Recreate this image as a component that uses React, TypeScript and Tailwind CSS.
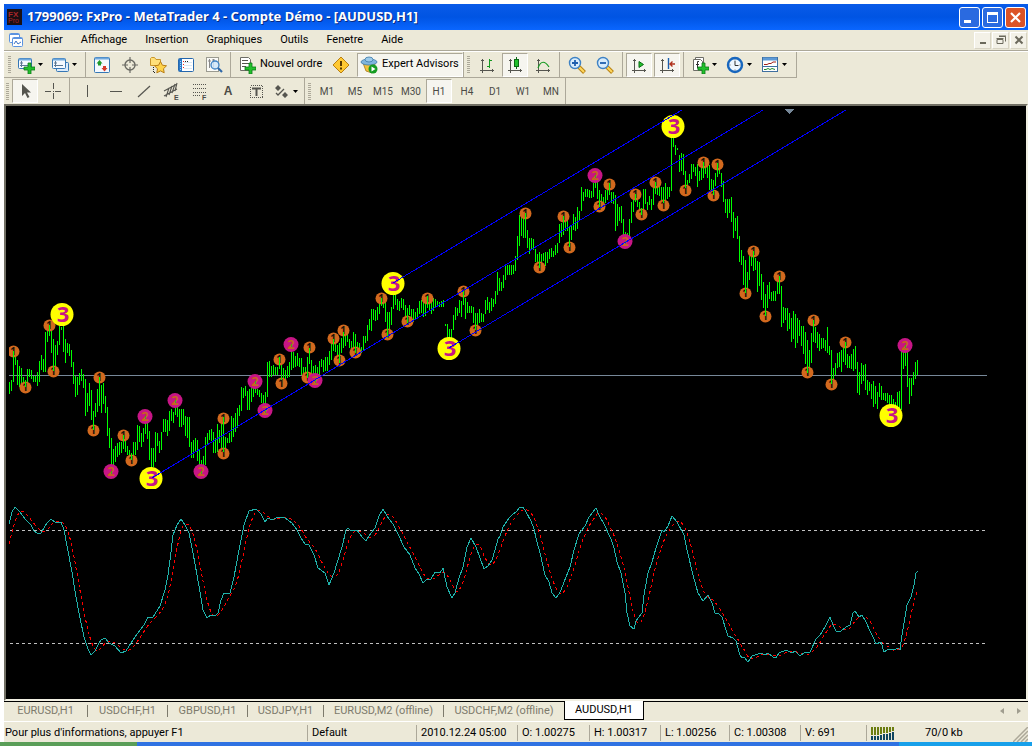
import type { ReactNode } from 'react';

// high-low of every bar, two pixels apart
const BAR_START = 9;
const BAR_STEP = 2;
const BARS = `
382-394 380-391 351-382 356-365 360-385 366-387 368-386 377-383 380-387 369-386
369-377 370-379 376-382 376-382 372-386 361-382 355-370 359-372 332-372 325-342
325-336 331-353 339-371 345-367 341-355 326-345 327-330 326-352 339-363 343-353
344-356 350-367 362-384 376-397 377-395 373-385 369-381 374-388 379-416 393-412
383-406 390-420 411-430 403-417 389-412 377-406 385-413 383-404 396-413 407-436
428-448 438-468 449-468 446-462 443-457 442-455 442-453 435-449 441-452 446-455
450-458 453-460 442-456 442-455 425-450 426-442 433-447 428-442 423-434 423-439
431-460 448-468 448-467 432-462 433-446 441-453 432-450 419-432 419-432 420-436
411-431 409-421 412-423 408-415 407-417 409-427 409-427 409-425 416-436 417-438
417-447 442-458 440-458 438-452 440-461 449-470 460-470 456-468 437-465 433-445
430-440 429-441 432-453 438-453 424-452 430-443 423-448 417-452 437-450 438-443
433-443 416-442 418-437 413-432 408-428 405-416 387-411 388-398 386-396 391-410
389-410 388-402 388-397 388-393 389-395 390-397 393-403 395-405 392-407 362-397
361-377 366-377 365-375 367-375 367-375 357-369 365-380 368-381 370-380 366-378
362-377 350-370 352-368 356-367 353-366 358-367 358-375 367-380 367-382 357-378
348-364 360-382 366-375 365-377 367-377 361-375 359-367 360-372 357-371 357-371
351-365 343-360 339-351 342-352 345-355 343-363 338-353 332-348 333-346 333-342
339-348 341-355 332-347 334-353 342-352 343-353 347-353 336-350 336-343 325-341
319-330 309-331 309-320 310-321 307-320 303-314 298-306 298-308 301-322 312-338
312-332 307-325 293-309 295-305 299-310 301-311 298-308 299-310 305-318 308-323
305-315 309-318 309-322 312-320 308-318 301-314 300-313 301-317 299-316 296-308
300-310 302-314 298-311 299-307 301-306 302-307 301-307 300-307 324-326 324-338
329-338 329-338 315-330 307-320 308-316 300-313 301-317 290-305 298-319 302-313
306-313 306-313 307-323 313-330 313-327 309-323 313-322 314-322 300-314 297-310
302-313 298-311 299-307 291-304 272-295 278-291 282-291 275-288 264-280 265-275
265-275 265-275 265-274 256-271 236-260 215-246 216-236 218-238 213-238 230-248
238-254 238-250 239-250 249-262 254-267 252-268 254-262 253-261 252-266 252-263
249-259 248-257 251-257 245-255 243-253 224-243 223-237 216-235 221-231 219-231
227-247 226-240 214-230 217-231 207-229 211-220 187-211 192-201 189-197 189-197
190-198 191-198 183-197 175-188 182-199 190-207 194-205 197-204 190-203 188-200
183-195 192-203 192-204 195-231 204-226 207-221 206-223 219-235 232-242 233-240
219-237 202-223 197-212 194-202 197-207 202-215 208-215 189-210 189-204 202-210
196-205 199-210 187-205 182-194 185-195 184-196 187-205 187-203 183-200 187-199
187-197 133-191 138-147 145-155 148-150 155-172 153-171 154-175 171-188 180-187
174-183 164-179 164-172 167-176 164-187 171-181 168-180 162-178 165-174 164-178
165-190 179-195 180-195 173-186 163-177 167-174 173-187 181-202 199-213 199-218
199-213 197-222 212-238 218-231 216-239 236-262 250-265 256-285 260-293 272-288
256-280 256-266 251-271 258-270 261-292 262-286 274-300 282-308 294-316 285-308
282-299 292-301 291-301 291-301 280-294 276-294 286-327 307-323 308-320 308-331
313-329 318-342 311-339 314-348 318-343 320-336 326-346 326-354 332-364 340-373
350-367 333-363 320-342 327-343 332-348 334-351 338-349 338-348 340-351 327-353
346-355 350-384 368-380 363-375 353-368 352-367 350-372 344-362 342-365 354-368
356-368 354-369 349-371 346-369 362-393 372-395 363-384 365-381 364-390 380-395
382-391 384-399 381-407 386-404 392-409 383-397 386-400 393-400 393-401 393-403
395-405 395-410 399-405 402-408 392-410 391-408 348-410 352-369 345-366 352-387
378-404 378-396 372-385 362-379 360-375
`.trim().split(/\s+/).map((bar) => bar.split('-').map(Number));

const STOCHASTIC = `
9,524 12,512 15,507 20,512 26,520 31,525 34,531 37,533 41,533 44,528 47,523 51,519 55,522 61,522
64,530 68,551 72,572 76,597 80,618 84,637 88,649 91,655 95,651 98,645 101,640 105,638 109,643
115,646 121,653 126,651 131,643 137,634 144,625 148,617 153,617 160,606 165,590 168,575 170,560
173,535 177,525 181,519 185,525 189,533 193,553 197,575 200,592 203,610 207,618 211,615 215,616
218,613 221,600 224,593 230,593 234,577 239,550 244,525 249,511 256,509 261,514 265,522 268,518
272,520 278,517 284,517 292,523 297,530 301,538 305,544 309,545 314,555 318,568 325,573 329,585
334,573 338,560 342,547 346,530 348,528 351,531 357,530 362,537 366,541 369,536 375,528 379,516
383,509 387,516 393,524 399,536 404,547 410,555 415,568 419,574 423,583 427,579 431,579 435,572
440,573 443,568 447,587 452,598 455,593 459,578 463,567 467,547 471,538 476,547 480,558 484,569
488,566 492,560 495,550 498,539 500,536 503,527 509,518 513,514 516,512 520,507 523,507 526,512
531,521 534,529 536,538 540,553 543,566 545,575 549,582 552,593 556,598 559,594 561,590 564,582
570,567 574,550 579,534 585,526 589,517 596,508 599,515 604,524 611,539 614,548 617,562 621,573
625,593 627,613 630,626 634,629 636,621 642,613 644,595 648,573 652,562 656,548 662,530 664,532
668,526 672,516 677,522 684,535 687,550 693,575 698,593 703,601 708,595 712,603 715,613 719,614
722,617 726,630 728,636 733,638 736,641 740,655 742,658 744,657 748,662 752,656 761,653 765,655
768,653 773,657 776,658 779,653 786,650 792,653 795,651 800,656 804,653 810,652 816,639 820,635
825,627 830,617 833,625 836,631 841,631 846,627 850,625 853,613 855,611 859,617 862,615 866,622
870,631 873,637 876,644 881,642 884,652 889,649 896,649 898,648 900,650 902,635 907,605 911,597
914,585 916,573 918,571
`.trim().split(/\s+/).map((point) => point.split(',').map(Number));

const valueAt = (x: number) => {
  if (x <= STOCHASTIC[0][0]) return 524 + (9 - x) * 4;
  const i = STOCHASTIC.findIndex((p) => p[0] >= x);
  if (i < 1) return STOCHASTIC[STOCHASTIC.length - 1][1];
  const [x0, y0] = STOCHASTIC[i - 1];
  const [x1, y1] = STOCHASTIC[i];
  return y0 + ((y1 - y0) * (x - x0)) / (x1 - x0);
};

// signal line: moving average of the main line
const SIGNAL = BARS.map((_, i) => {
  const x = BAR_START + i * BAR_STEP;
  const window = [0, 2, 4, 6, 8, 10].map((back) => valueAt(x - back));
  return [x, Math.round(window.reduce((a, b) => a + b, 0) / window.length)];
});

const LEVEL_1 = [
  [13, 351], [49, 325], [53, 371], [25, 387], [99, 377], [93, 430], [123, 435], [131, 460], [223, 418], [223, 453],
  [279, 359], [281, 383], [309, 347], [307, 377], [333, 338], [339, 360], [343, 330], [355, 352], [381, 298],
  [387, 334], [407, 321], [427, 298], [463, 291], [475, 330], [525, 213], [539, 267], [563, 216], [569, 247],
  [609, 184], [599, 206], [635, 194], [641, 214], [655, 182], [663, 205], [685, 190], [703, 162], [717, 164],
  [713, 195], [745, 293], [753, 251], [765, 316], [779, 276], [807, 372], [813, 320], [831, 384], [845, 342],
];

const LEVEL_2 = [
  [111, 471], [145, 416], [175, 400], [201, 471], [255, 381], [265, 410], [291, 344], [315, 380], [595, 175],
  [625, 241], [905, 345],
];

const LEVEL_3 = [[62, 314], [151, 478], [393, 283], [449, 348], [673, 126], [891, 415]];

const toPoints = (list: number[][]) => list.map((p) => p.join(',')).join(' ');

function Bar({ index }: { index: number }) {
  const x = BAR_START + index * BAR_STEP;
  const [high, low] = BARS[index];
  return <rect x={x} y={high} width="1" height={low - high} fill="#00ff00" />;
}

function Chart() {
  return (
    <svg
      width="1020"
      height="593"
      viewBox="6 106 1020 593"
      className="block shrink-0"
      role="img"
      aria-label="AUDUSD,H1"
    >
      <clipPath id="pricePane">
        <rect x="9" y="106" width="1017" height="383" />
      </clipPath>
      <rect x="9" y="375" width="978" height="1" fill="#778899" />
      <path d="M785 109h9v1h-1v1h-1v1h-1v1h-1v1h-1v-1h-1v-1h-1v-1h-1v-1h-1z" fill="#778899" />

      <g clipPath="url(#pricePane)">
        <g shapeRendering="crispEdges">
          {BARS.map((_, i) => <Bar key={i} index={i} />)}
        </g>
        {LEVEL_1.map(([x, y]) => (
          <g key={`${x}-${y}`}>
            <circle cx={x + 0.5} cy={y + 0.5} r="6" fill="#d2691e" />
            <text x={x} y={y + 4} textAnchor="middle" className="font-['Open_Sans'] text-[10px] font-bold" fill="#1c1408">1</text>
            <Bar index={Math.round((x - BAR_START) / BAR_STEP)} />
          </g>
        ))}
        {LEVEL_2.map(([x, y]) => (
          <g key={`${x}-${y}`}>
            <circle cx={x} cy={y + 0.5} r="7.5" fill="#c71585" />
            <text x={x} y={y + 5} textAnchor="middle" className="font-['Open_Sans'] text-[13px] font-bold" fill="#c8641e">2</text>
            <rect x={x} y={y} width="1" height="3" fill="#3fae20" />
          </g>
        ))}
        {LEVEL_3.map(([x, y]) => (
          <g key={`${x}-${y}`}>
            <circle cx={x} cy={y + 0.5} r="11.5" fill="#ffff00" />
            <text x={x + 1} y={y + 8} textAnchor="middle" className="font-['Open_Sans'] text-[22px] font-bold" fill="#c71585">3</text>
          </g>
        ))}
      </g>

      <g stroke="#0000ff" shapeRendering="crispEdges">
        <path d="M393 283L682 110" />
        <path d="M152 478L763 110" />
        <path d="M449 348L846 110" />
      </g>

      <g stroke="#c0c0c0" strokeDasharray="3 3" shapeRendering="crispEdges">
        <path d="M10 530.5H986" />
        <path d="M10 643.5H986" />
      </g>
      <g fill="none" shapeRendering="crispEdges">
        <polyline points={toPoints(SIGNAL)} stroke="#ff0000" strokeDasharray="3 3" />
        <polyline points={toPoints(STOCHASTIC)} stroke="#20b2aa" />
      </g>
    </svg>
  );
}

/* Toolbar pieces */

function Grip() {
  return (
    <span className="flex flex-col items-center gap-px py-1">
      {Array.from({ length: 9 }, (_, i) => <i key={i} className="h-px w-[3px] bg-[#aca899]" />)}
    </span>
  );
}

function Sep() {
  return <span className="mx-[2px] w-px self-stretch bg-[#aca899]" />;
}

function ToolButton({ label, pressed, drop, children }: { label: string; pressed?: boolean; drop?: boolean; children: ReactNode }) {
  return (
    <button
      type="button"
      aria-label={label}
      aria-pressed={pressed}
      className={
        drop
          ? 'flex h-6 w-[34px] items-center gap-[3px] pl-[2px]'
          : pressed
            ? 'mx-px flex h-6 w-[26px] items-center justify-center border border-t-[#aca899] border-l-[#aca899] border-r-white border-b-white bg-[#f6f5ef]'
            : 'flex h-6 w-7 items-center justify-center'
      }
    >
      {children}
      {drop && (
        <svg width="5" height="3" viewBox="0 0 5 3"><path d="M0 0h5L2.5 3z" fill="#000" /></svg>
      )}
    </button>
  );
}

function Icon({ children }: { children: ReactNode }) {
  return <svg width="18" height="18" viewBox="0 0 18 18" fill="none" className="shrink-0">{children}</svg>;
}

const plus = <path d="M11 7h3v4h4v3h-4v4h-3v-4H7v-3h4z" fill="#22c02c" stroke="#0b7a18" strokeWidth=".8" />;

const axes = (
  <g stroke="#55554f" shapeRendering="crispEdges">
    <path d="M4.5 3v14M2 14.5h14" />
    <path d="M3 4.5h3M14.5 13v3" />
  </g>
);

function NewChartIcon() {
  return (
    <Icon>
      <rect x="1.500" y="2.500" width="13" height="10" rx="1" fill="#f4f9ff" stroke="#3577b5" />
      <path d="M2 3.500h12" stroke="#6fa8dc" strokeWidth="2" />
      <path d="M4.500 5v6M3 9.500h9M3 7h3" stroke="#5c7894" />
      {plus}
    </Icon>
  );
}

function ProfilesIcon() {
  return (
    <Icon>
      <rect x="5.500" y="6.500" width="12" height="9" rx="1" fill="#dcebfa" stroke="#3577b5" />
      <rect x="1.500" y="2.500" width="13" height="10" rx="1" fill="#f4f9ff" stroke="#3577b5" />
      <path d="M2 3.500h12" stroke="#6fa8dc" strokeWidth="2" />
      <path d="M4.500 5v6M3 9.500h9M3 7h3" stroke="#5c7894" />
    </Icon>
  );
}

function MarketWatchIcon() {
  return (
    <Icon>
      <rect x="1.500" y="1.500" width="15" height="15" rx="1" fill="#f4f9ff" stroke="#3577b5" />
      <path d="M2 2.500h14" stroke="#6fa8dc" strokeWidth="2" />
      <path d="M6.500 4l3 3.500H8v2H5v-2H3.500z" fill="#1f9a2c" />
      <path d="M11.500 15.500l-3-3.500H10v-2h3v2h1.500z" fill="#d63a2a" />
    </Icon>
  );
}

function TargetIcon() {
  return (
    <Icon>
      <circle cx="9" cy="9" r="5" stroke="#6b6b64" strokeWidth="1.400" />
      <path d="M9 1v6M9 11v6M1 9h6M11 9h6" stroke="#6b6b64" strokeWidth="1.200" />
    </Icon>
  );
}

function NavigatorIcon() {
  return (
    <Icon>
      <path d="M1.500 9.500V2.500l1-1h3l1.500 2h4.500v6z" fill="#ffe07a" stroke="#c9962c" />
      <path d="M4.500 11v5.500H7" stroke="#222" strokeDasharray="1 1" />
      <path d="M11.500 5.500l1.900 3.700 4.100.6-3 2.900.7 4.100-3.700-1.900-3.700 1.900.7-4.100-3-2.900 4.100-.6z" fill="#ffd34a" stroke="#b87d14" />
    </Icon>
  );
}

function TerminalIcon() {
  return (
    <Icon>
      <rect x="1.500" y="2.500" width="15" height="13" rx="1" fill="#fff" stroke="#2467ad" />
      <path d="M2 3h3v12H2z" fill="#2b78c6" />
      <path d="M3.500 5v9" stroke="#9bd0ff" strokeDasharray="1 1" />
      <path d="M7 6.500h8M7 9.500h8M7 12.500h8" stroke="#dbe8f5" />
      <path d="M6 5h1v1H6zM6 8h1v1H6zM6 11h1v1H6z" fill="#e22" />
      <path d="M8 5h1v1H8zM10 5h1v1h-1z" fill="#222" />
    </Icon>
  );
}

function TesterIcon() {
  return (
    <Icon>
      <rect x="1.500" y="1.500" width="12" height="14" fill="#fbfbf7" stroke="#9b9b90" />
      <path d="M4.500 3v9M8.500 3v9M3 5h3M7 4h3" stroke="#888" />
      <circle cx="10" cy="9" r="4" fill="#cfe6fa" fillOpacity=".85" stroke="#3e82c4" strokeWidth="1.300" />
      <path d="M13 12l4 4" stroke="#2e67a8" strokeWidth="2.200" />
    </Icon>
  );
}

function OrderIcon() {
  return (
    <Icon>
      <path d="M2.500 1.500h8l2 2v11h-10z" fill="#fff" stroke="#6d6d66" />
      <path d="M4 4.500h6M4 7.500h7M4 10.500h4" stroke="#55554f" />
      {plus}
    </Icon>
  );
}

function WarningIcon() {
  return (
    <Icon>
      <path d="M9 1l8 8-8 8-8-8z" fill="#ffc933" stroke="#b97f10" />
      <path d="M9 5v5M9 11.500v2" stroke="#5a3a00" strokeWidth="2" />
    </Icon>
  );
}

function ExpertIcon() {
  return (
    <Icon>
      <path d="M3 7l3 8 6 2 3-9z" fill="#f3c23c" stroke="#a6771a" strokeWidth=".8" />
      <ellipse cx="9" cy="6" rx="8" ry="3" fill="#7fb5dd" stroke="#3d7aa8" strokeWidth=".8" />
      <ellipse cx="9" cy="3.500" rx="4" ry="2.500" fill="#9ccbeb" stroke="#3d7aa8" strokeWidth=".8" />
      <circle cx="13" cy="13" r="4.500" fill="#159c22" />
      <path d="M11.500 10.500l4 2.500-4 2.500z" fill="#fff" />
    </Icon>
  );
}

function ZoomIcon({ sign }: { sign: 'in' | 'out' }) {
  return (
    <Icon>
      <path d="M11 11l5.500 5.500" stroke="#b98313" strokeWidth="4" />
      <path d="M11 11l5 5" stroke="#ffd75e" strokeWidth="2" />
      <circle cx="7" cy="7" r="5.500" fill="#d8ecfb" stroke="#3e82c4" strokeWidth="1.400" />
      <path d={sign === 'in' ? 'M4 7h6M7 4v6' : 'M4 7h6'} stroke="#1e5fae" strokeWidth="1.800" />
    </Icon>
  );
}

function IndicatorsIcon() {
  return (
    <Icon>
      <path d="M4.500 1.500h8v13h-8z" fill="#fff" stroke="#6d6d66" />
      <path d="M2.500 3.500h7l2 2v9h-9z" fill="#fff" stroke="#6d6d66" />
      <path d="M8 5.500H6.500v7M5 8.500h3" stroke="#333" />
      {plus}
    </Icon>
  );
}

function ClockIcon() {
  return (
    <Icon>
      <circle cx="9" cy="9" r="7" fill="#eef6ff" stroke="#1766bd" strokeWidth="2.400" />
      <path d="M9 5v4.500h3.500" stroke="#333" />
      <path d="M9 3.500v1M9 13.500v1M3.500 9h1M13.500 9h1" stroke="#666" />
    </Icon>
  );
}

function TemplateIcon() {
  return (
    <Icon>
      <rect x="1.500" y="1.500" width="15" height="14" fill="#fff" stroke="#3f6f9f" />
      <path d="M2 3h14" stroke="#5d9ad6" strokeWidth="3" />
      <path d="M2 10.500h14" stroke="#3f6f9f" />
      <path d="M3 8.500h3l2-1h2l2-1.500h3" stroke="#a32018" />
      <path d="M3 13.500h2l2-1 2 1 2-1 3 1" stroke="#1f8a2c" />
    </Icon>
  );
}

function StandardToolbar() {
  return (
    <div className="flex h-[26px] w-fit items-center border-r border-b border-[#aca899] pr-[3px]">
      <span className="w-[11px]"><Grip /></span>
      <ToolButton label="Nouveau graphique" drop><NewChartIcon /></ToolButton>
      <ToolButton label="Profils" drop><ProfilesIcon /></ToolButton>
      <Sep />
      <ToolButton label="Cotations"><MarketWatchIcon /></ToolButton>
      <ToolButton label="Réticule"><TargetIcon /></ToolButton>
      <ToolButton label="Navigateur"><NavigatorIcon /></ToolButton>
      <ToolButton label="Terminal"><TerminalIcon /></ToolButton>
      <ToolButton label="Testeur"><TesterIcon /></ToolButton>
      <Sep />
      <button type="button" className="flex h-6 w-[94px] items-center gap-1 pl-[5px] whitespace-nowrap">
        <OrderIcon />
        Nouvel ordre
      </button>
      <ToolButton label="Avertissements"><WarningIcon /></ToolButton>
      <button
        type="button"
        aria-pressed="true"
        className="ml-[2px] flex h-6 w-[106px] items-center gap-1 border border-t-[#aca899] border-r-white border-b-white border-l-[#aca899] bg-[#f6f5ef] pl-[2px] whitespace-nowrap"
      >
        <ExpertIcon />
        Expert Advisors
      </button>
      <span className="w-[10px] border-l border-[#aca899]"><Grip /></span>
      <ToolButton label="Barres">
        <Icon>{axes}<path d="M11.500 3v9M9 10.500h2M12 4.500h2" stroke="#149a20" shapeRendering="crispEdges" /></Icon>
      </ToolButton>
      <ToolButton label="Chandeliers" pressed>
        <Icon>{axes}<path d="M10.500 1v12" stroke="#0b6a14" /><rect x="8.500" y="3.500" width="4" height="7" fill="#22c02c" stroke="#0b6a14" /></Icon>
      </ToolButton>
      <ToolButton label="Ligne">
        <Icon>{axes}<path d="M4 12c3-8 7-7 11-1" stroke="#149a20" strokeWidth="1.200" /></Icon>
      </ToolButton>
      <Sep />
      <div className="flex px-px">
        <ToolButton label="Zoom avant"><ZoomIcon sign="in" /></ToolButton>
        <ToolButton label="Zoom arrière"><ZoomIcon sign="out" /></ToolButton>
      </div>
      <Sep />
      <ToolButton label="Défilement automatique" pressed>
        <Icon>{axes}<path d="M9 5.500v6l4.500-3z" fill="#22c02c" stroke="#0b6a14" /></Icon>
      </ToolButton>
      <ToolButton label="Décalage du graphique" pressed>
        <Icon>{axes}<path d="M10.500 2v11" stroke="#1b5fae" strokeWidth="1.400" /><path d="M17 8h-5M14.500 5.500L12 8l2.500 2.500" stroke="#b0301c" strokeWidth="1.400" /></Icon>
      </ToolButton>
      <Sep />
      <div className="flex gap-px pl-[3px]">
        <ToolButton label="Indicateurs" drop><IndicatorsIcon /></ToolButton>
        <ToolButton label="Périodes" drop><ClockIcon /></ToolButton>
        <ToolButton label="Modèles" drop><TemplateIcon /></ToolButton>
      </div>
    </div>
  );
}

const TIMEFRAMES = ['M1', 'M5', 'M15', 'M30', 'H1', 'H4', 'D1', 'W1', 'MN'];

function DrawingToolbar() {
  return (
    <div className="flex h-[26px] items-center text-[#4b4b46]">
      <span className="w-[7px]"><Grip /></span>
      <ToolButton label="Curseur" pressed>
        <Icon><path d="M6 2v12l3-3 2.500 5 2-1-2.500-4.500h4z" fill="#55554f" /></Icon>
      </ToolButton>
      <ToolButton label="Croix">
        <Icon><path d="M9.500 1v6M9.500 11v6M1 9.500h6M11 9.500h6M9 9.500h1" stroke="#55554f" shapeRendering="crispEdges" /></Icon>
      </ToolButton>
      <Sep />
      <div className="ml-[2px] flex">
        <ToolButton label="Ligne verticale">
          <Icon><path d="M8.500 3v12" stroke="#55554f" /></Icon>
        </ToolButton>
        <ToolButton label="Ligne horizontale">
          <Icon><path d="M3 9.500h12" stroke="#55554f" /></Icon>
        </ToolButton>
        <ToolButton label="Ligne de tendance">
          <Icon><path d="M3 15L15 4" stroke="#55554f" strokeWidth="1.200" /></Icon>
        </ToolButton>
        <ToolButton label="Canal équidistant">
          <Icon>
            <path d="M1 9l13-7M1 14l13-7M3 15l3-9M6 13l3-9M9 11l3-9M12 9l2-8" stroke="#55554f" strokeWidth="1.100" />
            <text x="11" y="18" className="font-['Liberation_Sans'] text-[7px] font-bold" fill="#4b4b46">E</text>
          </Icon>
        </ToolButton>
        <ToolButton label="Fibonacci">
          <Icon>
            <path d="M2 2.500h14M2 6.500h14M2 10.500h14M2 13.500h8" stroke="#55554f" strokeDasharray="1 1" />
            <text x="11" y="18" className="font-['Liberation_Sans'] text-[7px] font-bold" fill="#4b4b46">F</text>
          </Icon>
        </ToolButton>
        <ToolButton label="Texte">
          <span className="font-['Liberation_Sans',sans-serif] text-xs font-bold">A</span>
        </ToolButton>
        <ToolButton label="Étiquette">
          <Icon>
            <rect x="3.500" y="3.500" width="12" height="12" stroke="#55554f" strokeDasharray="1 1" shapeRendering="crispEdges" />
            <path d="M5 6.500h9M9.500 6v8" stroke="#55554f" strokeWidth="2" />
          </Icon>
        </ToolButton>
        <ToolButton label="Flèches" drop>
          <Icon>
            <path d="M6 3l3 3-3 3-3-3zM13 10l3 3-3 3-3-3z" fill="#55554f" />
            <path d="M4 11l2 2 6-6" stroke="#55554f" strokeWidth="1.300" />
          </Icon>
        </ToolButton>
      </div>
      <span className="flex h-full w-[9px] items-center border-l border-[#aca899] pl-[3px]"><Grip /></span>
      <div className="flex h-full items-center border-r border-[#aca899] text-[10px]">
        {TIMEFRAMES.map((name) => (
          <ToolButton key={name} label={name} pressed={name === 'H1'}>{name}</ToolButton>
        ))}
      </div>
    </div>
  );
}

function TitleBar() {
  const button = 'flex size-[21px] items-center justify-center rounded-[3px] border border-white';
  return (
    <header className="flex h-[26px] items-center bg-linear-to-b from-[#0a5be8] via-[#0054e3] to-[#0a66ff] pr-[2px] pl-[3px]">
      <svg width="15" height="16" viewBox="0 0 15 16" className="mr-[5px]">
        <rect width="15" height="16" fill="#1a0f12" />
        <text x="1" y="8" className="font-['Liberation_Sans'] text-[8px] font-bold" fill="#a8262a">FX</text>
        <text x="1" y="14" className="font-['Liberation_Sans'] text-[7px]" fill="#a8262a">Pro</text>
      </svg>
      <h1 className="grow font-['Noto_Sans',sans-serif] text-[13px] font-bold text-white [text-shadow:1px_1px_0_#0a2a80]">
        1799069: FxPro - MetaTrader 4 - Compte Démo - [AUDUSD,H1]
      </h1>
      <div className="flex gap-[2px]">
        <button type="button" aria-label="Réduire" className={`${button} bg-[#2a6ae0]`}>
          <svg width="13" height="13" viewBox="0 0 13 13"><path d="M1 9h7v3H1z" fill="#fff" /></svg>
        </button>
        <button type="button" aria-label="Agrandir" className={`${button} bg-[#2a6ae0]`}>
          <svg width="13" height="13" viewBox="0 0 13 13"><path d="M1 1h11v11H1zM2 4v7h9V4z" fill="#fff" fillRule="evenodd" /></svg>
        </button>
        <button type="button" aria-label="Fermer" className={`${button} bg-[#dc5427]`}>
          <svg width="13" height="13" viewBox="0 0 13 13"><path d="M2 2l9 9M11 2l-9 9" stroke="#fff" strokeWidth="2.200" /></svg>
        </button>
      </div>
    </header>
  );
}

function MenuBar() {
  const button = 'flex h-[17px] w-[17px] items-center justify-center border border-t-white border-l-white border-r-[#d8d4c4] border-b-[#d8d4c4] bg-[#f3f1e7]';
  return (
    <nav className="flex h-[21px] items-center border-b border-[#aca899] pl-[5px]">
      <svg width="14" height="15" viewBox="0 0 14 15" fill="none" className="mr-[7px]">
        <rect x=".5" y=".5" width="10" height="9" rx="1" fill="#fff" stroke="#5b93e0" />
        <rect x="3.500" y="4.500" width="10" height="9" rx="1" fill="#fff" stroke="#5b93e0" />
        <path d="M1 1.500h9M4 5.500h9" stroke="#5b93e0" />
        <path d="M5 11l2-3 2 3 3-2" stroke="#3c72c4" />
      </svg>
      <div className="flex grow gap-[18px] pt-px">
        {['Fichier', 'Affichage', 'Insertion', 'Graphiques', 'Outils', 'Fenetre', 'Aide'].map((item) => (
          <button key={item} type="button">{item}</button>
        ))}
      </div>
      <div className="flex gap-px pr-px">
        <button type="button" aria-label="Réduire le graphique" className={button}>
          <svg width="10" height="10" viewBox="0 0 10 10"><path d="M2 7h6v2H2z" fill="#6b695c" /></svg>
        </button>
        <button type="button" aria-label="Restaurer le graphique" className={button}>
          <svg width="10" height="10" viewBox="0 0 10 10" fill="none"><path d="M3 1.500h6.500v5M1 4.500h6v4H1z" stroke="#6b695c" /><path d="M.5 3.500h7M3 1h7" stroke="#6b695c" /></svg>
        </button>
        <button type="button" aria-label="Fermer le graphique" className={button}>
          <svg width="10" height="10" viewBox="0 0 10 10"><path d="M1.500 1.500l7 7M8.500 1.500l-7 7" stroke="#6b695c" strokeWidth="2" /></svg>
        </button>
      </div>
    </nav>
  );
}

const TABS = [
  { name: 'EURUSD,H1', width: 'w-[84px]' },
  { name: 'USDCHF,H1', width: 'w-[80px]' },
  { name: 'GBPUSD,H1', width: 'w-[80px]' },
  { name: 'USDJPY,H1', width: 'w-[76px]' },
  { name: 'EURUSD,M2 (offline)', width: 'w-[120px]' },
  { name: 'USDCHF,M2 (offline)', width: 'w-[120px]' },
];

function ChartTabs() {
  return (
    <div className="flex h-5 items-start border-t border-black">
      <div role="tablist" className="flex grow">
        {TABS.map(({ name, width }, i) => (
          <button
            key={name}
            role="tab"
            type="button"
            className={`flex h-[18px] items-center justify-center text-[#7d7a6c] ${width}`}
          >
            <span className="grow text-center">{name}</span>
            {i < TABS.length - 1 && <i className="h-3 w-px bg-[#7d7a6c]" />}
          </button>
        ))}
        <button
          role="tab"
          type="button"
          aria-selected="true"
          className="-mt-px h-[19px] w-[80px] border border-t-0 border-black bg-white"
        >
          AUDUSD,H1
        </button>
      </div>
      <div className="flex h-[18px] items-center gap-[13px] pr-[7px]">
        <button type="button" aria-label="Onglets précédents">
          <svg width="4" height="6" viewBox="0 0 4 6"><path d="M4 0v6L0 3z" fill="#a09d8f" /></svg>
        </button>
        <button type="button" aria-label="Onglets suivants">
          <svg width="4" height="6" viewBox="0 0 4 6"><path d="M0 0v6l4-3z" fill="#a09d8f" /></svg>
        </button>
      </div>
    </div>
  );
}

function StatusBar() {
  const cell = 'h-4 border-l border-[#aca899] pl-1 leading-4';
  return (
    <footer className="flex h-[21px] items-center border-t border-white pt-[2px] whitespace-nowrap">
      <span className="w-[303px] pl-px">Pour plus d'informations, appuyer F1</span>
      <span className={`${cell} w-[109px]`}>Default</span>
      <span className={`${cell} w-[101px]`}>2010.12.24 05:00</span>
      <span className={`${cell} w-[72px]`}>O: 1.00275</span>
      <span className={`${cell} w-[71px]`}>H: 1.00317</span>
      <span className={`${cell} w-[69px]`}>L: 1.00256</span>
      <span className={`${cell} w-[71px]`}>C: 1.00308</span>
      <span className={`${cell} w-[66px]`}>V: 691</span>
      <span className={`${cell} flex grow items-center gap-[30px]`}>
        <svg width="24" height="13" viewBox="0 0 24 13" shapeRendering="crispEdges">
          {[8, 8, 8, 7, 6, 6, 5, 4].map((top, i) => (
            <g key={i}>
              <rect x={i * 3} y="0" width="2" height={top} fill="#6b7d10" />
              <rect x={i * 3} y={top + 1} width="2" height={12 - top} fill="#0f4560" />
            </g>
          ))}
        </svg>
        70/0 kb
      </span>
      <svg width="15" height="15" viewBox="0 0 15 15" className="self-end">
        <path d="M0 15L15 0M4 15L15 4M8 15l7-7M12 15l3-3" stroke="#aca899" strokeWidth="1.500" />
      </svg>
    </footer>
  );
}

export default function App() {
  return (
    <div className="bg-white pt-1 font-['Roboto','Liberation_Sans',sans-serif] text-[11px] text-black">
      <div className="mx-1 bg-[#ece9d8]">
        <TitleBar />
        <MenuBar />
        <div className="border-t border-white">
          <StandardToolbar />
          <DrawingToolbar />
        </div>
        <main className="overflow-hidden border-t-2 border-r-2 border-b-2 border-l-2 border-t-[#716f64] border-r-[#f1efe2] border-b-[#f1efe2] border-l-[#716f64] bg-black">
          <Chart />
        </main>
        <ChartTabs />
        <StatusBar />
      </div>
      {/* Top edge of the desktop taskbar */}
      <div className="flex h-1">
        <span className="w-[137px] bg-[#5a9e58]" />
        <span className="grow bg-[#2f72e2]" />
        <span className="w-[133px] bg-[#18a0ea]" />
      </div>
    </div>
  );
}
